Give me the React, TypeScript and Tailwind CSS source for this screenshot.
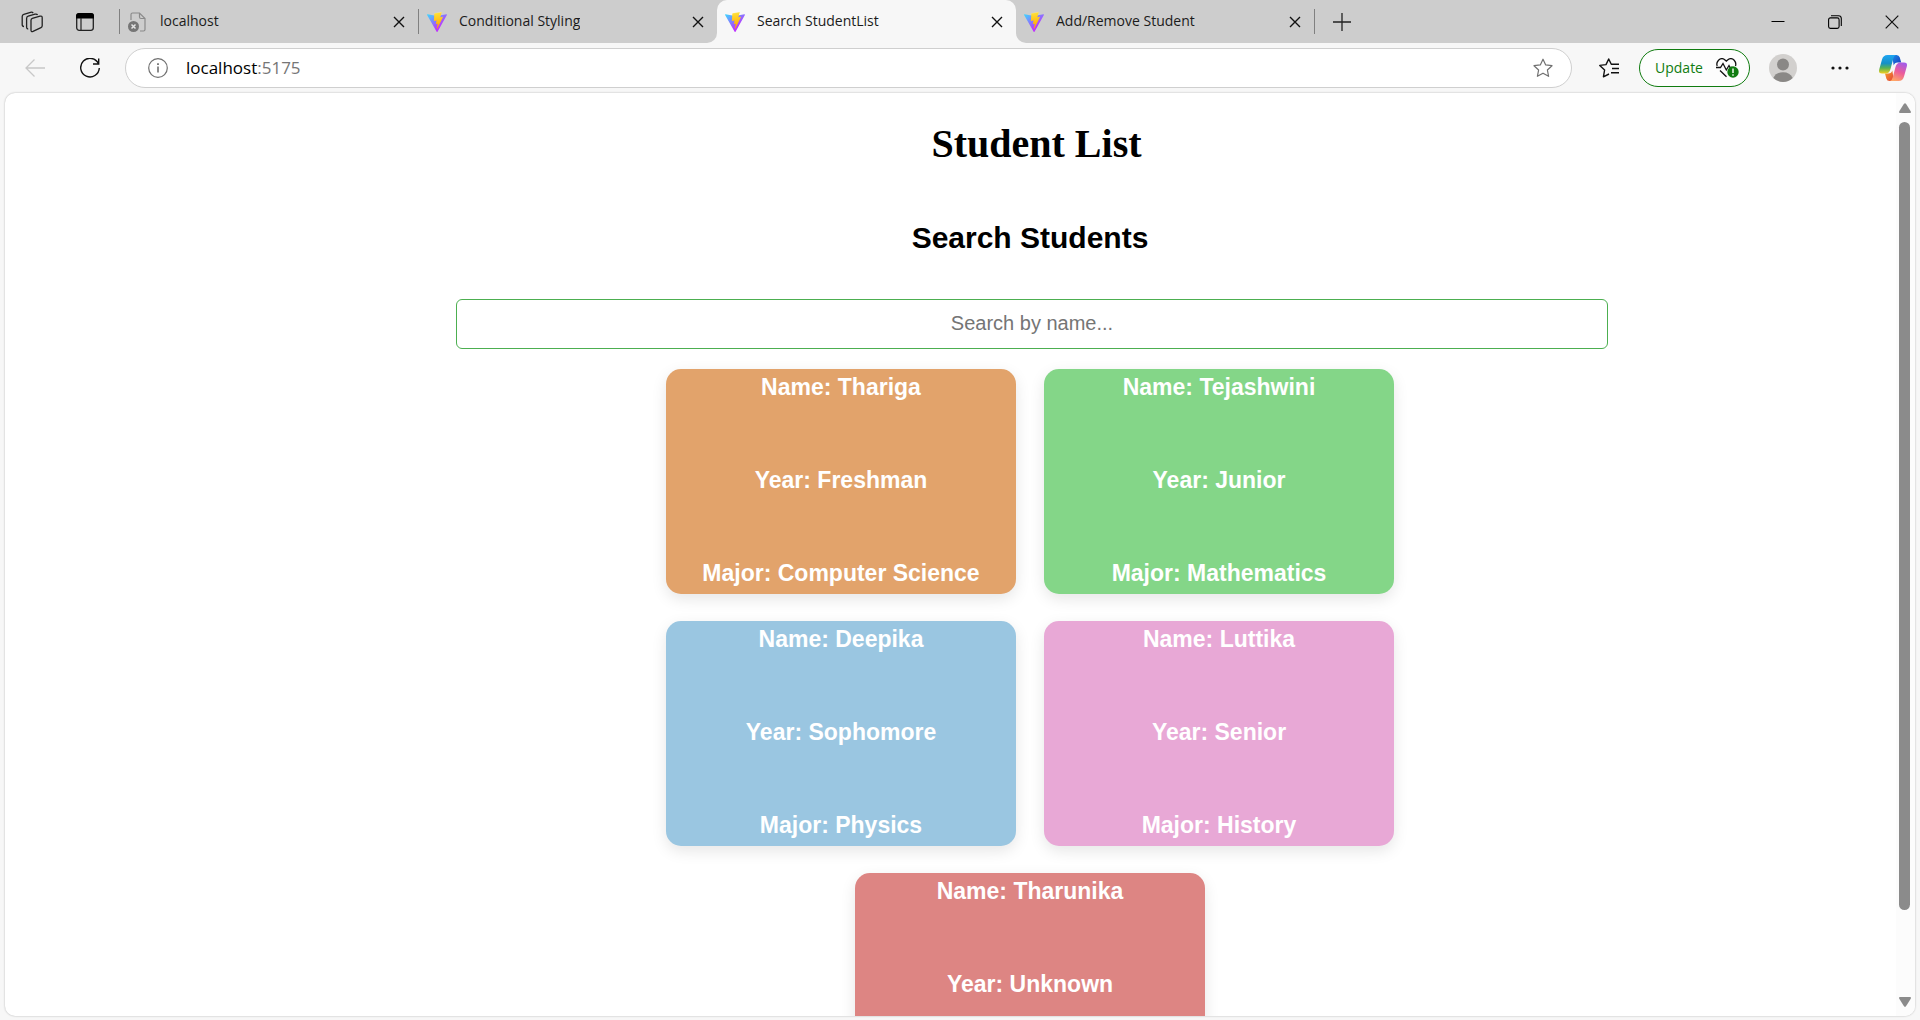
import { useId, useState } from "react";

type Student = { name: string; year: string; major?: string; color: string };

const students: Student[] = [
  { name: "Thariga", year: "Freshman", major: "Computer Science", color: "bg-[#e2a36b]" },
  { name: "Tejashwini", year: "Junior", major: "Mathematics", color: "bg-[#84d688]" },
  { name: "Deepika", year: "Sophomore", major: "Physics", color: "bg-[#9ac6e1]" },
  { name: "Luttika", year: "Senior", major: "History", color: "bg-[#e8a8d6]" },
  { name: "Tharunika", year: "Unknown", color: "bg-[#dd8583]" },
];

function ViteLogo() {
  const id = useId();
  return (
    <svg viewBox="0 0 256 257" className="size-5 shrink-0" aria-hidden="true">
      <defs>
        <linearGradient id={id + "a"} x1="-.828%" x2="57.636%" y1="7.652%" y2="78.411%">
          <stop offset="0%" stopColor="#41D1FF" />
          <stop offset="100%" stopColor="#BD34FE" />
        </linearGradient>
        <linearGradient id={id + "b"} x1="43.376%" x2="50.316%" y1="2.242%" y2="89.03%">
          <stop offset="0%" stopColor="#FFEA83" />
          <stop offset="8.333%" stopColor="#FFDD35" />
          <stop offset="100%" stopColor="#FFA800" />
        </linearGradient>
      </defs>
      <path
        fill={`url(#${id}a)`}
        d="M255.153 37.938L134.897 252.976c-2.483 4.44-8.862 4.466-11.382.048L.875 37.958c-2.746-4.814 1.371-10.646 6.827-9.67l120.385 21.517a6.537 6.537 0 0 0 2.322-.004l117.867-21.483c5.438-.991 9.574 4.796 6.877 9.62Z"
      />
      <path
        fill={`url(#${id}b)`}
        d="M185.432.063L96.44 17.501a3.268 3.268 0 0 0-2.634 3.014l-5.474 92.456a3.268 3.268 0 0 0 3.997 3.378l24.777-5.718c2.318-.535 4.413 1.507 3.936 3.838l-7.361 36.047c-.495 2.426 1.782 4.5 4.151 3.78l15.304-4.649c2.372-.72 4.652 1.36 4.15 3.788l-11.698 56.621c-.732 3.542 3.979 5.473 5.943 2.437l1.313-2.028l72.516-144.72c1.215-2.423-.88-5.186-3.54-4.672l-25.505 4.922c-2.396.462-4.435-1.77-3.759-4.114l16.646-57.705c.677-2.35-1.37-4.583-3.769-4.113Z"
      />
    </svg>
  );
}

function BrokenPageIcon() {
  return (
    <svg viewBox="0 0 20 20" className="size-5 shrink-0" fill="none" aria-hidden="true">
      <path
        d="M3 8V2.500Q3 1 4.500 1H11.500L17 6.500V17.500Q17 19 15.500 19H12M11.500 1V5Q11.500 6.500 13 6.500H17"
        stroke="#8a8a8a"
        strokeWidth="1.200"
      />
      <circle cx="5.500" cy="14.500" r="5.500" fill="#767676" />
      <path d="M3.500 12.500l4 4m0-4l-4 4" stroke="#e4e4e4" strokeWidth="1.500" />
    </svg>
  );
}

function CrossIcon() {
  return (
    <svg viewBox="0 0 12 12" className="size-3" fill="none" stroke="#111" strokeWidth="1.400" aria-hidden="true">
      <path d="M1 1l10 10M11 1L1 11" />
    </svg>
  );
}

function Tab({ title, broken }: { title: string; broken?: boolean }) {
  return (
    <div className="flex h-[43px] min-w-0 flex-1 items-center pr-[7px] pl-2">
      <a href="#" className="flex min-w-0 flex-1 items-center gap-3 text-sm leading-5 text-[#1b1b1b]">
        {broken ? <BrokenPageIcon /> : <ViteLogo />}
        <span className="truncate pb-0.5">{title}</span>
      </a>
      <button aria-label={`Close ${title}`} className="flex size-6 items-center justify-center">
        <CrossIcon />
      </button>
    </div>
  );
}

function Separator() {
  return <div className="h-[25px] w-px shrink-0 bg-[#808080]" />;
}

function TabStrip() {
  return (
    <div className="flex h-[43px]">
      <div className="flex w-[717px] shrink-0 items-center rounded-br-[10px] bg-[#cdcdcd]">
        <div className="flex w-[119px] items-center gap-8 pl-[21px]">
          <button aria-label="Workspaces">
            <svg viewBox="0 0 22 22" className="size-[22px]" fill="none" stroke="#222" strokeWidth="1.300" strokeLinejoin="round" aria-hidden="true">
              <path d="M10 9.200Q10 7.700 11.300 7.300L19 5.200Q21.200 4.700 21.200 6.700V14.800Q21.200 16.200 20 16.700L12 20.400Q10 21.100 10 19.200Z" />
              <path d="M7.200 18Q5.600 18 5.600 16.300V7.500Q5.600 5.700 7.200 5.200L14 3.200Q15.800 2.700 16.600 4" />
              <path d="M3 15.500Q1.200 15.500 1.200 13.700V5.500Q1.200 3.800 2.800 3.300L9.500 1.300Q11.200.8 12.200 2" />
            </svg>
          </button>
          <button aria-label="Tab actions">
            <svg viewBox="0 0 20 20" className="size-5" fill="none" aria-hidden="true">
              <rect x="1.700" y="1.700" width="16.600" height="16.600" rx="2.500" stroke="#222" strokeWidth="1.300" />
              <path d="M1 6.500V4Q1 1 4 1H16Q19 1 19 4V6.500Z" fill="#000" />
              <path d="M6 6V18" stroke="#222" strokeWidth="1.200" />
            </svg>
          </button>
        </div>
        <Separator />
        <Tab title="localhost" broken />
        <Separator />
        <Tab title="Conditional Styling" />
      </div>
      <div className="w-[299px] shrink-0 bg-[#cdcdcd]">
        <div className="flex rounded-t-[10px] bg-[#f7f7f7]">
          <Tab title="Search StudentList" />
        </div>
      </div>
      <div className="flex flex-1 items-center rounded-bl-[10px] bg-[#cdcdcd]">
        <div className="flex w-[298px] shrink-0">
          <Tab title="Add/Remove Student" />
        </div>
        <Separator />
        <button aria-label="New tab" className="ml-[15px] flex h-10 w-6 items-center justify-center">
          <svg viewBox="0 0 18 18" className="size-[18px]" stroke="#222" strokeWidth="1.300" aria-hidden="true">
            <path d="M9 0V18M0 9H18" />
          </svg>
        </button>
        <div className="ml-auto flex">
          <button aria-label="Minimize" className="flex h-[43px] w-[57px] items-center justify-center">
            <svg viewBox="0 0 14 14" className="size-3.5" stroke="#000" aria-hidden="true">
              <path d="M.5 6.500H13.500" />
            </svg>
          </button>
          <button aria-label="Restore" className="flex h-[43px] w-[57px] items-center justify-center">
            <svg viewBox="0 0 14 14" className="size-3.5" fill="none" stroke="#000" strokeWidth="1.100" aria-hidden="true">
              <rect x=".6" y="2.900" width="10.500" height="10.500" rx="1.800" />
              <path d="M3 .7H10.500Q13.300 .7 13.300 3.500V11" />
            </svg>
          </button>
          <button aria-label="Close window" className="flex h-[43px] w-[57px] items-center justify-center">
            <svg viewBox="0 0 14 14" className="size-3.5" stroke="#111" strokeWidth="1.200" aria-hidden="true">
              <path d="M.7 .7L13.300 13.300M13.300 .7L.7 13.300" />
            </svg>
          </button>
        </div>
      </div>
    </div>
  );
}

function CopilotIcon() {
  const id = useId();
  return (
    <svg viewBox="0 0 28 26" className="h-[26px] w-7" aria-hidden="true">
      <defs>
        <linearGradient id={id + "a"} x1="0" x2="0" y1="0" y2="1">
          <stop offset="0" stopColor="#1ea5f2" />
          <stop offset=".45" stopColor="#1590c8" />
          <stop offset=".7" stopColor="#57b255" />
          <stop offset="1" stopColor="#f3cf1d" />
        </linearGradient>
        <linearGradient id={id + "b"} x1=".7" x2=".3" y1="0" y2="1">
          <stop offset="0" stopColor="#a45be8" />
          <stop offset=".5" stopColor="#ec5c9a" />
          <stop offset="1" stopColor="#ffa765" />
        </linearGradient>
        <linearGradient id={id + "c"} x1="0" x2="1" y1="0" y2="1">
          <stop offset="0" stopColor="#1c8be8" />
          <stop offset="1" stopColor="#1638ba" />
        </linearGradient>
        <linearGradient id={id + "d"} x1="0" x2="1" y1="0" y2="1">
          <stop offset="0" stopColor="#f7a325" />
          <stop offset="1" stopColor="#e2403c" />
        </linearGradient>
      </defs>
      <path fill={`url(#${id}c)`} d="M13 0H17.500Q20 0 20.800 2.500L22.200 7.500H18.500Q15.500 7.500 14.700 10.500Z" />
      <path fill={`url(#${id}d)`} d="M15 26H10.500Q8 26 7.300 23.500L6 18.500H9.500Q12.500 18.500 13.300 15.500Z" />
      <path fill={`url(#${id}a)`} d="M8.500 0H17Q15 .8 14.300 3.500L11.500 14Q10.300 18.500 6.500 18.500H3Q-.8 18.500 .2 14.500L3 4.500Q4.200 0 8.500 0Z" />
      <path fill={`url(#${id}b)`} d="M19.500 26H11Q13 25.200 13.700 22.500L16.500 12Q17.700 7.500 21.500 7.500H25Q28.800 7.500 27.800 11.500L25 21.500Q23.800 26 19.500 26Z" />
    </svg>
  );
}

const starPath = "M10 1.200L12.700 6.900L19 7.700L14.400 12L15.600 18.300L10 15.200L4.400 18.300L5.600 12L1 7.700L7.300 6.900Z";

function Toolbar() {
  return (
    <div className="flex h-[50px] items-center pr-[13px] pl-[25px]">
      <button aria-label="Back" disabled>
        <svg viewBox="0 0 20 20" className="size-5" fill="none" stroke="#c8c8c8" strokeWidth="1.300" aria-hidden="true">
          <path d="M20 10H1M9.500 1.500L1 10L9.500 18.500" />
        </svg>
      </button>
      <button aria-label="Refresh" className="ml-[35px]">
        <svg viewBox="0 0 20 20" className="size-5" fill="none" stroke="#111" strokeWidth="1.400" aria-hidden="true">
          <path d="M18.500 5.800A9.300 9.300 0 1 0 19.300 10M18.700 .5V6H13" />
        </svg>
      </button>
      <div className="ml-[25px] flex h-10 min-w-0 flex-1 items-center rounded-full border border-[#cfcfcf] bg-white pr-[18px] pl-[22px]">
        <svg viewBox="0 0 20 20" className="size-5 shrink-0" fill="none" stroke="#707070" aria-hidden="true">
          <circle cx="10" cy="10" r="9.300" strokeWidth="1.200" />
          <path d="M10 8.500V14.500" strokeWidth="1.600" />
          <path d="M10 5.300V7" strokeWidth="1.800" />
        </svg>
        <a href="#" className="ml-[18px] flex-1 text-[17px] leading-6 text-black">
          localhost<span className="text-[#767676]">:5175</span>
        </a>
        <button aria-label="Add to favorites">
          <svg viewBox="0 0 20 20" className="size-5" fill="none" stroke="#707070" strokeWidth="1.200" strokeLinejoin="round" aria-hidden="true">
            <path d={starPath} />
          </svg>
        </button>
      </div>
      <button aria-label="Favorites" className="ml-[27px]">
        <svg viewBox="0 0 20 20" className="size-5" fill="none" stroke="#111" strokeWidth="1.400" strokeLinejoin="round" aria-hidden="true">
          <path d="M10 16L4.400 18.800L5.600 12L.8 7.400L7 6.600L9.700 1L12.300 6.300H20M13 10.500H20M12 14.800H20" />
        </svg>
      </button>
      <button className="ml-5 flex h-[38px] items-center gap-3 rounded-full border border-[#107c10] bg-[#fdfdfd] pr-2.5 pl-[14px] text-sm leading-5 text-[#107c10]">
        <span className="w-[50px]">Update</span>
        <svg viewBox="0 0 23 20" className="h-5 w-[23px]" fill="none" aria-hidden="true">
          <path d="M1.200 8Q0 5 2.500 2.200Q5.800 -.8 9 1.900L10.300 3.100L11.600 1.900Q15 -.8 18.200 2.200Q20.500 4.800 19.500 8" stroke="#111" strokeWidth="1.300" />
          <path d="M0 9.500H4.500L7 5.500L10.300 12L13 7.500L14 9.500H16M4 12.500L10.500 18.800" stroke="#111" strokeWidth="1.300" />
          <circle cx="17" cy="14" r="5.700" fill="#107c10" />
          <path d="M17 10.500V15M17 16.200V17.700" stroke="#fff" strokeWidth="1.400" />
        </svg>
      </button>
      <button aria-label="Profile" className="ml-[19px]">
        <svg viewBox="0 0 28 28" className="size-7" aria-hidden="true">
          <circle cx="14" cy="14" r="14" fill="#d2d0ce" />
          <circle cx="14" cy="10.500" r="6" fill="#8a8886" />
          <path d="M4.300 24Q7 18.300 14 18.300T23.700 24Q19.500 28 14 28T4.300 24Z" fill="#8a8886" />
        </svg>
      </button>
      <button aria-label="Settings and more" className="ml-[34px]">
        <svg viewBox="0 0 18 18" className="size-[18px]" fill="#111" aria-hidden="true">
          <circle cx="2" cy="9" r="1.600" />
          <circle cx="9" cy="9" r="1.600" />
          <circle cx="16" cy="9" r="1.600" />
        </svg>
      </button>
      <button aria-label="Copilot" className="ml-[30px]">
        <CopilotIcon />
      </button>
    </div>
  );
}

function StudentCard({ student }: { student: Student }) {
  return (
    <li
      className={`flex h-[225px] w-[350px] flex-col gap-[66px] rounded-[15px] pt-[5px] text-center text-[23px] leading-[27px] font-bold text-white shadow-[0_5px_15px_rgba(0,0,0,0.1)] ${student.color}`}
    >
      <h3>Name: {student.name}</h3>
      <h3>Year: {student.year}</h3>
      {student.major && <h3>Major: {student.major}</h3>}
    </li>
  );
}

function ScrollBar() {
  return (
    <div className="flex w-[19px] shrink-0 flex-col items-center bg-[#fcfcfc] pt-2.5 pr-0.5 pb-[9px]" aria-hidden="true">
      <svg viewBox="0 0 12 10" className="h-2.5 w-3" fill="#8b8b8b">
        <path d="M5 .8Q6 -.5 7 .8L11.700 8.200Q12.500 10 11 10H1Q-.5 10 .3 8.200Z" />
      </svg>
      <div className="mt-[9px] flex min-h-0 w-[11px] flex-1 flex-col">
        <div className="basis-[90%] rounded-full bg-[#8b8b8b]" />
      </div>
      <svg viewBox="0 0 12 10" className="h-2.5 w-3" fill="#8b8b8b">
        <path d="M5 9.200Q6 10.500 7 9.200L11.700 1.800Q12.500 0 11 0H1Q-.5 0 .3 1.800Z" />
      </svg>
    </div>
  );
}

export default function App() {
  const [query, setQuery] = useState("");
  const shown = students.filter((s) => s.name.toLowerCase().includes(query.toLowerCase()));

  return (
    <div className="flex h-screen flex-col overflow-hidden bg-[#f7f7f7] font-['Open_Sans','Noto_Sans',sans-serif]">
      <TabStrip />
      <Toolbar />
      <div className="mx-[5px] mb-1 flex min-h-0 flex-1 overflow-hidden rounded-[10px] bg-white shadow-[0_0_2px_rgba(0,0,0,0.3)]">
        <main className="min-w-0 flex-1 overflow-y-auto font-['Liberation_Sans',Arial,sans-serif] text-black [scrollbar-width:none]">
          <h1 className="mt-7 pl-[172px] text-center font-['Liberation_Serif','Times_New_Roman',serif] text-[40px] leading-[46px] font-bold">
            Student List
          </h1>
          <section className="flex flex-col items-center pl-[163px]">
            <h2 className="mt-[54px] pr-1 text-[30px] leading-[34px] font-bold">
              <label htmlFor="search">Search Students</label>
            </h2>
            <input
              id="search"
              type="text"
              value={query}
              onChange={(e) => setQuery(e.target.value)}
              placeholder="Search by name..."
              className="mt-11 h-[50px] w-full max-w-[1152px] rounded-md border border-[#4caf50] bg-white pb-0.5 text-center text-xl placeholder:text-[#757575]"
            />
            <ul className="mt-5 flex max-w-[1000px] flex-wrap justify-center gap-x-7 gap-y-[27px] pr-1">
              {shown.map((s) => (
                <StudentCard key={s.name} student={s} />
              ))}
            </ul>
          </section>
        </main>
        <ScrollBar />
      </div>
    </div>
  );
}
